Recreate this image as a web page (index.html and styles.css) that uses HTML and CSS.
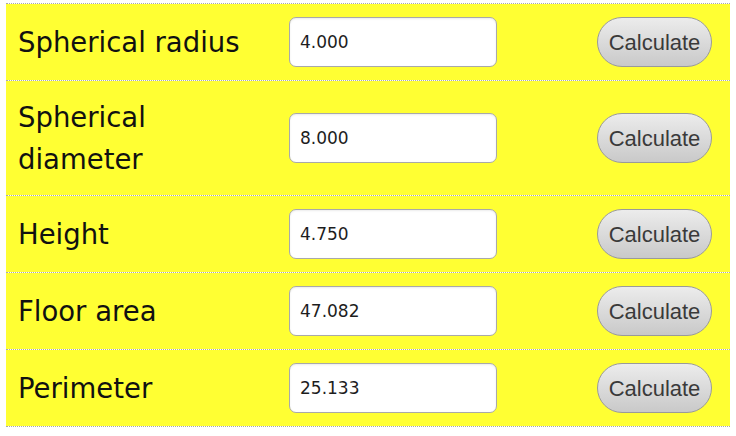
FILE: index.html
```html
<!DOCTYPE html>
<html lang="en">
<head>
    <meta charset="UTF-8">
    <meta name="viewport" content="width=device-width, initial-scale=1.0">
    <title>Sphere Calculator</title>
    <link rel="stylesheet" href="styles.css">
</head>
<body>

    <div class="calc">
        <div class="row">
            <label class="name" for="radius">Spherical radius</label>
            <div class="field"><input type="text" id="radius" value="4.000"></div>
            <div class="action"><button class="calcBtn">Calculate</button></div>
        </div>
        <div class="row">
            <label class="name" for="diameter">Spherical diameter</label>
            <div class="field"><input type="text" id="diameter" value="8.000"></div>
            <div class="action"><button class="calcBtn">Calculate</button></div>
        </div>
        <div class="row">
            <label class="name" for="height">Height</label>
            <div class="field"><input type="text" id="height" value="4.750"></div>
            <div class="action"><button class="calcBtn">Calculate</button></div>
        </div>
        <div class="row">
            <label class="name" for="floorArea">Floor area</label>
            <div class="field"><input type="text" id="floorArea" value="47.082"></div>
            <div class="action"><button class="calcBtn">Calculate</button></div>
        </div>
        <div class="row">
            <label class="name" for="perimeter">Perimeter</label>
            <div class="field"><input type="text" id="perimeter" value="25.133"></div>
            <div class="action"><button class="calcBtn">Calculate</button></div>
        </div>
    </div>

</body>
</html>
```

FILE: styles.css
```css
body {
    margin: 0;
    padding: 0;
    background-color: #fff;
    font-family: 'DejaVu Sans', Verdana, sans-serif;
    color: #111;
}

.calc {
    margin: 3px 6px;
    border-top: 1px dotted #aaa;
}

.row {
    display: grid;
    grid-template-columns: 271px 307px 146px;
    align-items: center;
    background-color: #ffff33;
    background-clip: padding-box;
    border-bottom: 1px dotted #aaa;
}

.name {
    font-size: 27.5px;
    line-height: 42px;
    padding: 15px 12px;
}

.field {
    padding: 13px 12px;
}

input {
    display: block;
    width: 208px;
    height: 50px;
    box-sizing: border-box; /* border included in size */
    padding: 0 10px;
    border: 1px solid #a9a9a9;
    border-radius: 7px;
    background: #fff;
    font-family: 'DejaVu Sans', Verdana, sans-serif;
    font-size: 17px;
    color: #1d1d1d;
    box-shadow: inset 0 1px 2px rgba(0, 0, 0, 0.08);
}

.action {
    padding-left: 13px;
}

.calcBtn {
    width: 115px;
    height: 50px;
    padding: 2px 0 0;
    border: 1px solid #9a9a9a;
    border-radius: 25px;
    background: linear-gradient(#ececec, #c9c9c9);
    font-family: 'Liberation Sans', Arial, sans-serif;
    font-size: 22px;
    color: #3a3a3a;
    cursor: pointer;
}

    .calcBtn:hover {
        background: linear-gradient(#f4f4f4, #d2d2d2);
    }
```
